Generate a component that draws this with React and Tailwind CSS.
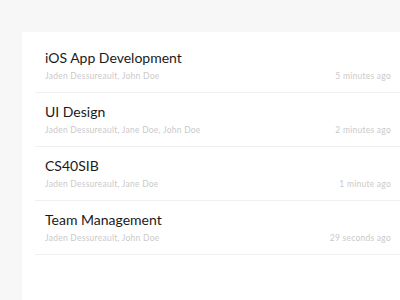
import React from 'react';

const items = [
  { title: 'iOS App Development', people: 'Jaden Dessureault, John Doe', time: '5 minutes ago' },
  { title: 'UI Design', people: 'Jaden Dessureault, Jane Doe, John Doe', time: '2 minutes ago' },
  { title: 'CS40SIB', people: 'Jaden Dessureault, Jane Doe', time: '1 minute ago' },
  { title: 'Team Management', people: 'Jaden Dessureault, John Doe', time: '29 seconds ago' },
];

const App = () => {
  return (
    <div className="w-[400px] h-[300px] overflow-hidden bg-[#f7f7f7] pt-[32px] pl-[22px] font-['Lato','Noto_Sans',sans-serif]">
      <div className="h-full bg-white pt-[7px] pl-[13px]">
        <ul>
          {items.map(item => (
            <li key={item.title} className="h-[54px] border-b border-[#efefef] pl-[10px] pr-[9px] pt-[9px]">
              <h2 className="text-[14px] leading-[20px] text-[#1a1a1a]">{item.title}</h2>
              <div className="mt-[2px] flex justify-between text-[8.5px] leading-[12px] tracking-[0.25px] text-[#cacaca]">
                <span>{item.people}</span>
                <span>{item.time}</span>
              </div>
            </li>
          ))}
        </ul>
      </div>
    </div>
  );
};

export default App;
